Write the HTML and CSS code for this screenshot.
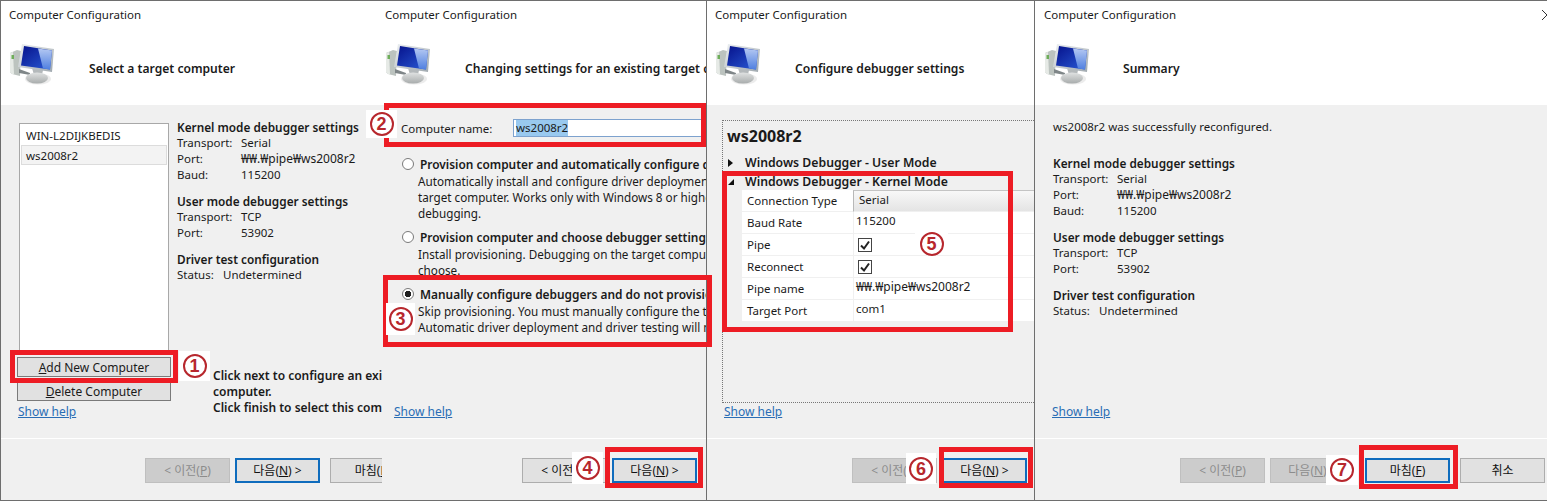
FILE: index.html
```html
<!DOCTYPE html>
<html lang="en">

<head>
    <meta charset="UTF-8">
    <meta name="viewport" content="width=device-width, initial-scale=1.0">
    <title>Computer Configuration</title>
    <link rel="stylesheet" href="styles.css">
</head>

<body>

<svg class="defs" width="0" height="0">
    <defs>
        <linearGradient id="screenBlue" x1="0" y1="0" x2="1" y2="1">
            <stop offset="0" stop-color="#06128c"/>
            <stop offset="1" stop-color="#2a5bd6"/>
        </linearGradient>
        <linearGradient id="screenGlare" x1="0" y1="0" x2="0" y2="1">
            <stop offset="0" stop-color="#b4c8f2"/>
            <stop offset="1" stop-color="#4f7fe0"/>
        </linearGradient>
        <linearGradient id="frameGrey" x1="0" y1="0" x2="1" y2="1">
            <stop offset="0" stop-color="#eef1f3"/>
            <stop offset="1" stop-color="#9fa8ae"/>
        </linearGradient>
        <linearGradient id="baseGrey" x1="0" y1="0" x2="0" y2="1">
            <stop offset="0" stop-color="#e0e2e2"/>
            <stop offset="1" stop-color="#a8acac"/>
        </linearGradient>
        <symbol id="computerIcon" viewBox="0 0 48 42">
            <polygon points="0,10 7,7 11,8 10,33 2,31 0,29" fill="#bcc3bf"/>
            <polygon points="0,10 3,9 4,31 2,31 0,29" fill="#e6eae6"/>
            <rect x="1.5" y="12" width="2.5" height="4" fill="#6fae5a"/>
            <polygon points="9,26 20,30 20,32 9,30" fill="#7f8688"/>
            <polygon points="22,25 33,27 32,32 24,32" fill="#b4b9bb"/>
            <ellipse cx="28" cy="36" rx="13" ry="5.5" fill="#e4e4e4" opacity="0.7"/>
            <ellipse cx="27" cy="35" rx="11" ry="5.5" fill="url(#baseGrey)"/>
            <polygon points="12,1 44,6 42,29 8,24" fill="url(#frameGrey)"/>
            <polygon points="14,3 42,7.500 40,26.500 11,22.500" fill="url(#screenBlue)"/>
            <polygon points="28,5.500 42,7.500 40,26.500 33,25.500" fill="url(#screenGlare)"/>
        </symbol>
    </defs>
</svg>

<div class="page">

    <div class="panel panel-select">
        <div class="head">
            <div class="caption">Computer Configuration</div>
            <div class="head-row">
                <svg class="computer"><use href="#computerIcon"/></svg>
                <div class="step-title">Select a target computer</div>
            </div>
        </div>
        <div class="body body-select">
            <div class="list-col">
                <div class="target-list">
                    <div class="target-item">WIN-L2DIJKBEDIS</div>
                    <div class="target-item target-item-on">ws2008r2</div>
                </div>
                <button class="wide-btn wide-btn-add" type="button"><u>A</u>dd New Computer</button>
                <button class="wide-btn" type="button"><u>D</u>elete Computer</button>
                <a class="help help-select" href="#">Show help</a>
            </div>
            <div class="info-col">
                <div class="heading">Kernel mode debugger settings</div>
                <div class="kv"><span class="key">Transport:</span>Serial</div>
                <div class="kv"><span class="key">Port:</span><span class="path">₩₩.₩pipe₩ws2008r2</span></div>
                <div class="kv"><span class="key">Baud:</span>115200</div>
                <div class="heading heading-gap">User mode debugger settings</div>
                <div class="kv"><span class="key">Transport:</span>TCP</div>
                <div class="kv"><span class="key">Port:</span>53902</div>
                <div class="heading heading-gap">Driver test configuration</div>
                <div class="kv"><span class="key key-short">Status:</span>Undetermined</div>
                <div class="click-note">
                    Click next to configure an existing<br>
                    computer.<br>
                    Click finish to select this computer
                </div>
            </div>
        </div>
        <div class="foot foot-select">
            <button class="btn btn-off" type="button">&lt; 이전(<u>P</u>)</button>
            <button class="btn btn-main" type="button">다음(<u>N</u>) &gt;</button>
            <button class="btn btn-far" type="button">마침(<u>F</u>)</button>
        </div>
    </div>

    <div class="panel panel-change">
        <div class="head">
            <div class="caption">Computer Configuration</div>
            <div class="head-row">
                <svg class="computer"><use href="#computerIcon"/></svg>
                <div class="step-title">Changing settings for an existing target computer</div>
            </div>
        </div>
        <div class="body body-change">
            <div class="name-row">
                <label class="name-label">Computer name:</label>
                <div class="name-input"><span class="name-sel">ws2008r2</span></div>
            </div>
            <div class="option">
                <div class="option-title"><span class="radio"></span>Provision computer and automatically configure debuggers</div>
                <div class="option-text">Automatically install and configure driver deployment and</div>
                <div class="option-text">target computer. Works only with Windows 8 or higher</div>
                <div class="option-text">debugging.</div>
            </div>
            <div class="option">
                <div class="option-title"><span class="radio"></span>Provision computer and choose debugger settings</div>
                <div class="option-text">Install provisioning. Debugging on the target computer</div>
                <div class="option-text">choose.</div>
            </div>
            <div class="option">
                <div class="option-title"><span class="radio radio-on"></span>Manually configure debuggers and do not provision</div>
                <div class="option-text">Skip provisioning. You must manually configure the target</div>
                <div class="option-text">Automatic driver deployment and driver testing will not</div>
            </div>
            <a class="help help-change" href="#">Show help</a>
        </div>
        <div class="foot foot-change">
            <button class="btn" type="button">&lt; 이전(<u>P</u>)</button>
            <button class="btn btn-main" type="button">다음(<u>N</u>) &gt;</button>
        </div>
    </div>

    <div class="panel panel-debug">
        <div class="head">
            <div class="caption">Computer Configuration</div>
            <div class="head-row">
                <svg class="computer"><use href="#computerIcon"/></svg>
                <div class="step-title">Configure debugger settings</div>
            </div>
        </div>
        <div class="body body-debug">
            <div class="debug-group">
                <div class="debug-name">ws2008r2</div>
                <div class="tree-row tree-row-user">
                    <svg class="arrow" viewBox="0 0 8 8"><polygon points="1,0 6,4 1,8" fill="#111"/></svg>
                    Windows Debugger - User Mode
                </div>
                <div class="tree-row">
                    <svg class="arrow" viewBox="0 0 8 8"><polygon points="7,1 7,7 1,7" fill="#111"/></svg>
                    Windows Debugger - Kernel Mode
                </div>
                <div class="prop-grid">
                    <div class="prop-name">Connection Type</div>
                    <div class="prop-val prop-val-head">Serial</div>
                    <div class="prop-name">Baud Rate</div>
                    <div class="prop-val">115200</div>
                    <div class="prop-name">Pipe</div>
                    <div class="prop-val">
                        <svg class="check" viewBox="0 0 14 14"><rect x="0.5" y="0.5" width="13" height="13" fill="#fff" stroke="#444"/><path d="M3 7.5 L6 10.5 L11 3.5" fill="none" stroke="#222" stroke-width="2"/></svg>
                    </div>
                    <div class="prop-name">Reconnect</div>
                    <div class="prop-val">
                        <svg class="check" viewBox="0 0 14 14"><rect x="0.5" y="0.5" width="13" height="13" fill="#fff" stroke="#444"/><path d="M3 7.5 L6 10.5 L11 3.5" fill="none" stroke="#222" stroke-width="2"/></svg>
                    </div>
                    <div class="prop-name">Pipe name</div>
                    <div class="prop-val"><span class="path">₩₩.₩pipe₩ws2008r2</span></div>
                    <div class="prop-name">Target Port</div>
                    <div class="prop-val">com1</div>
                </div>
            </div>
            <a class="help help-debug" href="#">Show help</a>
        </div>
        <div class="foot foot-debug">
            <button class="btn btn-off" type="button">&lt; 이전(<u>P</u>)</button>
            <button class="btn btn-main" type="button">다음(<u>N</u>) &gt;</button>
        </div>
    </div>

    <div class="panel panel-summary">
        <div class="head">
            <div class="caption">Computer Configuration</div>
            <svg class="close" viewBox="0 0 10 10"><path d="M0 0 L10 10 M10 0 L0 10" stroke="#333" stroke-width="1" fill="none"/></svg>
            <div class="head-row">
                <svg class="computer"><use href="#computerIcon"/></svg>
                <div class="step-title">Summary</div>
            </div>
        </div>
        <div class="body body-summary">
            <div class="kv">ws2008r2 was successfully reconfigured.</div>
            <div class="heading heading-gap-big">Kernel mode debugger settings</div>
            <div class="kv"><span class="key">Transport:</span>Serial</div>
            <div class="kv"><span class="key">Port:</span><span class="path">₩₩.₩pipe₩ws2008r2</span></div>
            <div class="kv"><span class="key">Baud:</span>115200</div>
            <div class="heading heading-gap">User mode debugger settings</div>
            <div class="kv"><span class="key">Transport:</span>TCP</div>
            <div class="kv"><span class="key">Port:</span>53902</div>
            <div class="heading heading-gap">Driver test configuration</div>
            <div class="kv"><span class="key key-short">Status:</span>Undetermined</div>
            <a class="help help-summary" href="#">Show help</a>
        </div>
        <div class="foot foot-summary">
            <button class="btn btn-off" type="button">&lt; 이전(<u>P</u>)</button>
            <button class="btn btn-off" type="button">다음(<u>N</u>) &gt;</button>
            <button class="btn btn-main btn-far" type="button">마침(<u>F</u>)</button>
            <button class="btn btn-far" type="button">취소</button>
        </div>
    </div>

    <!-- red callouts drawn over the screenshots -->
    <div class="box box-1"></div>
    <div class="box box-2"></div>
    <div class="box box-3"></div>
    <div class="box box-4"></div>
    <div class="box box-5"></div>
    <div class="box box-6"></div>
    <div class="box box-7"></div>

    <div class="badge badge-1"><span class="num">1</span></div>
    <div class="badge badge-2"><span class="num">2</span></div>
    <div class="badge badge-3"><span class="num">3</span></div>
    <div class="badge badge-4"><span class="num">4</span></div>
    <div class="badge badge-5"><span class="num">5</span></div>
    <div class="badge badge-6"><span class="num">6</span></div>
    <div class="badge badge-7"><span class="num">7</span></div>
</div>

</body>
</html>
```

FILE: styles.css
```css
body {
    margin: 0;
    font-family: "Noto Sans", "Noto Sans CJK KR", sans-serif;
    font-size: 11.5px;
    line-height: 16px;
    color: #1a1a1a;
    background-color: #f0f0f0;
}

.defs {
    position: absolute;
}

.page {
    position: relative;
    display: flex;
    width: 1547px;
    height: 501px;
    overflow: hidden;
}

.panel {
    display: flex;
    flex-direction: column;
    box-sizing: border-box;
    height: 501px;
    position: relative;
    overflow: hidden;
    white-space: nowrap;
    border-top: 1px solid #6e6e6e;
    border-bottom: 1px solid #6e6e6e;
}

.panel-select {
    width: 382px;
    border-left: 1px solid #6e6e6e;
}

.panel-change {
    width: 325px;
    border-right: 1px solid #6e6e6e;
}

.panel-debug {
    width: 328px;
    border-right: 1px solid #6e6e6e;
}

.panel-summary {
    width: 512px;
}

.head {
    height: 104px;
    padding: 6px 0 0 8px;
    box-sizing: border-box;
    background-color: #fff;
    flex-shrink: 0;
}

.panel-change .head {
    padding-left: 3px;
}

.panel-debug .head {
    padding-left: 8px;
}

.panel-summary .head {
    padding-left: 9px;
}

.panel-summary .step-title {
    margin-left: 30px;
}

.head-row {
    display: flex;
    margin-top: 20px;
}

.computer {
    width: 48px;
    height: 42px;
    margin-left: 1px;
    flex-shrink: 0;
}

.step-title {
    margin-left: 31px;
    padding-top: 18px;
    font-size: 12.1px;
    font-weight: 600;
}

.close {
    position: absolute;
    top: 9px;
    right: -5px;
    width: 10px;
    height: 10px;
}

.body {
    flex: 1;
    min-height: 0;
    box-sizing: border-box;
    border-bottom: 1px solid #fff;
}

.heading {
    font-size: 11.8px;
    font-weight: 600;
}

.heading-gap {
    margin-top: 10px;
}

.heading-gap-big {
    margin-top: 20px;
}

.key {
    display: inline-block;
    width: 64px;
}

.key-short {
    width: 46px;
}

.path {
    font-size: 12px;
}

.help {
    display: block;
    font-size: 12px;
    color: #2a6db5;
}

/* select target */
.body-select {
    display: flex;
}

.list-col {
    display: flex;
    flex-direction: column;
    width: 154px;
    margin-left: 16px;
    flex-shrink: 0;
}

.target-list {
    height: 232px;
    margin: 18px 2px 0;
    padding: 1px;
    box-sizing: border-box;
    background-color: #fff;
    border: 1px solid #a8a8a8;
}

.target-item {
    height: 20px;
    padding-left: 5px;
    line-height: 22px;
}

.target-item-on {
    background-color: #f3f3f3;
    border: 1px solid #dcdcdc;
    padding-left: 4px;
    line-height: 20px;
    box-sizing: border-box;
}

.wide-btn {
    height: 20px;
    padding: 2px 0 0;
    font: inherit;
    font-size: 12px;
    color: inherit;
    background-color: #e1e1e1;
    border: 1px solid #7a7a7a;
}

.wide-btn-add {
    margin: 2px 0 4px;
}

.help-select {
    margin: 3px 0 0 1px;
}

.info-col {
    margin-left: 6px;
    padding-top: 14px;
}

.click-note {
    margin: 85px 0 0 36px;
    font-size: 12px;
    font-weight: 600;
}

/* change settings */
.body-change {
    display: flex;
    flex-direction: column;
    padding: 14px 0 18px 19px;
}

.name-row {
    display: flex;
    height: 18px;
}

.name-label {
    width: 112px;
    padding-top: 2px;
    flex-shrink: 0;
}

.name-input {
    flex: 1;
    height: 18px;
    padding-left: 2px;
    box-sizing: border-box;
    line-height: 16px;
    background-color: #fff;
    border: 1px solid #7da2ce;
    border-right: none;
}

.name-sel {
    display: inline-block;
    background-color: #99c9ef;
}

.option {
    position: relative;
    margin-top: 8px;
}

.name-row + .option {
    margin-top: 19px;
}

.option-title {
    display: flex;
    align-items: center;
    margin-bottom: 1px;
    font-size: 11.9px;
    font-weight: 600;
}

.option-text {
    margin-left: 17px;
    font-size: 11.7px;
}

.radio {
    width: 12px;
    height: 12px;
    margin-right: 6px;
    margin-left: 1px;
    box-sizing: border-box;
    flex-shrink: 0;
    background-color: #fff;
    border: 1px solid #7a7a7a;
    border-radius: 50%;
}

.radio-on {
    background: radial-gradient(circle, #222 0 3px, #fff 3.5px);
}

.help-change {
    margin: auto 0 0 -7px;
}

/* debugger settings */
.body-debug {
    padding: 15px 0 0 15px;
}

.debug-group {
    box-sizing: border-box;
    height: 283px;
    padding: 5px 0 0 4px;
    border: 1px dotted #777;
    border-right: none;
}

.debug-name {
    height: 22px;
    font-size: 16px;
    line-height: 20px;
    font-weight: 700;
}

.tree-row {
    display: flex;
    align-items: center;
    height: 19px;
    font-size: 12.25px;
    font-weight: 600;
}

.tree-row-user {
    margin-top: 5px;
}

.arrow {
    width: 8px;
    height: 8px;
    margin-right: 10px;
    flex-shrink: 0;
}

.prop-grid {
    display: grid;
    grid-template-columns: 111px 1fr;
    grid-auto-rows: 22px;
    margin: -1px 0 0 15px;
    background-color: #fff;
}

.prop-name {
    padding: 3px 0 0 5px;
    border-bottom: 1px solid #f0f0f0;
}

.prop-val {
    padding: 1px 0 0 2px;
    border-left: 1px solid #f0f0f0;
    border-bottom: 1px solid #f0f0f0;
}

.prop-val-head {
    padding-left: 5px;
    background: linear-gradient(#f8f8f8, #e4e4e4);
    border-top: 1px solid #c4c4c4;
    border-left: 1px solid #b8b8b8;
}

.check {
    display: block;
    width: 14px;
    height: 14px;
    margin: 3px 0 0 2px;
}

.help-debug {
    margin: 1px 0 0 2px;
}

/* summary */
.body-summary {
    display: flex;
    flex-direction: column;
    padding: 14px 0 18px 18px;
}

.help-summary {
    margin: auto 0 0 -1px;
}

/* bottom buttons */
.foot {
    display: flex;
    gap: 5px;
    height: 61px;
    box-sizing: border-box;
    padding-top: 19px;
    flex-shrink: 0;
    font-size: 12px;
}

.foot-select {
    padding-left: 144px;
}

.foot-change {
    padding-left: 140px;
}

.foot-debug {
    padding-left: 145px;
}

.foot-summary {
    padding-left: 145px;
}

.btn {
    width: 85px;
    height: 25px;
    padding: 0;
    box-sizing: border-box;
    font: inherit;
    color: #111;
    background-color: #e1e1e1;
    border: 1px solid #adadad;
    flex-shrink: 0;
}

.btn-off {
    color: #8c8c8c;
    background-color: #ccc;
    border-color: #bfbfbf;
}

.btn-main {
    border: 2px solid #0f6cbd;
}

.btn-far {
    margin-left: 5px;
}

/* callouts */
.box {
    position: absolute;
    box-sizing: border-box;
    border: 5px solid #ed1c24;
}

.box-1 {
    left: 10px;
    top: 350px;
    width: 168px;
    height: 33px;
}

.box-2 {
    left: 384px;
    top: 103px;
    width: 322px;
    height: 44px;
}

.box-3 {
    left: 383px;
    top: 275px;
    width: 329px;
    height: 72px;
}

.box-4 {
    left: 605px;
    top: 447px;
    width: 98px;
    height: 41px;
}

.box-5 {
    left: 722px;
    top: 171px;
    width: 291px;
    height: 161px;
}

.box-6 {
    left: 939px;
    top: 447px;
    width: 94px;
    height: 41px;
}

.box-7 {
    left: 1359px;
    top: 445px;
    width: 99px;
    height: 44px;
}

.badge {
    position: absolute;
    display: flex;
    align-items: center;
    justify-content: center;
    background-color: #fff;
}

.num {
    display: flex;
    align-items: center;
    justify-content: center;
    box-sizing: border-box;
    width: 24px;
    height: 24px;
    font-family: "Liberation Sans", sans-serif;
    font-size: 18px;
    font-weight: 700;
    color: #b7272d;
    border: 2px solid #b7272d;
    border-radius: 50%;
}

.badge-1 {
    left: 179px;
    top: 351px;
    width: 31px;
    height: 30px;
}

.badge-2 {
    left: 366px;
    top: 110px;
    width: 31px;
    height: 28px;
}

.badge-3 {
    left: 386px;
    top: 303px;
    width: 29px;
    height: 32px;
}

.badge-4 {
    left: 572px;
    top: 452px;
    width: 31px;
    height: 32px;
}

.badge-5 {
    left: 915px;
    top: 232px;
    width: 33px;
    height: 23px;
}

.badge-6 {
    left: 906px;
    top: 453px;
    width: 30px;
    height: 31px;
}

.badge-7 {
    left: 1326px;
    top: 455px;
    width: 32px;
    height: 30px;
}
```
